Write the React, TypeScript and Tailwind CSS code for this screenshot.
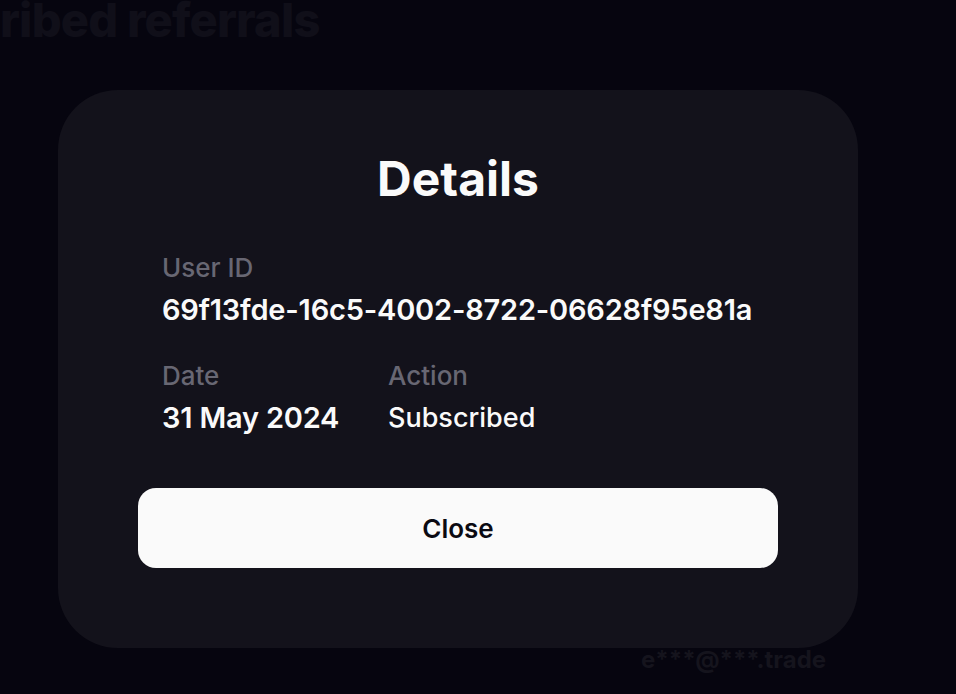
import React from "react";

const font = { fontFamily: "Inter, 'Noto Sans', sans-serif" };

const Field = ({
  label,
  value,
  className = "",
  valueClass = "text-[29px] font-semibold tracking-[-0.2px]",
}: {
  label: string;
  value: string;
  className?: string;
  valueClass?: string;
}) => (
  <div className={`flex flex-col ${className}`}>
    <span className="text-[26px] leading-[32px] font-medium text-[#686773]">{label}</span>
    <span className={`mt-[10px] leading-[32px] text-[#fafafa] ${valueClass}`}>{value}</span>
  </div>
);

export default function App() {
  return (
    <div className="relative w-[956px] h-[694px] overflow-hidden bg-[#06050f]" style={font}>
      {/* page behind the overlay */}
      <div className="absolute left-0 top-0 text-[47px] leading-[40px] font-extrabold text-[#100f19] tracking-[-0.8px] whitespace-nowrap">
        ribed referrals
      </div>
      <div className="absolute left-[641px] top-[642px] text-[24px] font-bold text-[#15141d] whitespace-nowrap">
        e***@***.trade
      </div>

      <div className="absolute inset-0 pl-[58px] pt-[90px]">
        <div className="w-[800px] h-[558px] rounded-[60px] bg-[#13121b] px-[80px] pt-[59px] flex flex-col">
          <h2 className="text-center text-[48px] leading-[60px] font-bold text-[#fafafa]">Details</h2>
          <div className="px-[24px] mt-[43px]">
            <Field label="User ID" value="69f13fde-16c5-4002-8722-06628f95e81a" />
            <div className="flex mt-[34px]">
              <Field label="Date" value="31 May 2024" className="w-[226px]" />
              <Field label="Action" value="Subscribed" valueClass="text-[27px] font-medium" />
            </div>
          </div>
          <button className="mt-[54px] h-[80px] w-full rounded-[18px] bg-[#fafafa] text-[26px] font-semibold text-[#0b0a12]">
            Close
          </button>
        </div>
      </div>
    </div>
  );
}
